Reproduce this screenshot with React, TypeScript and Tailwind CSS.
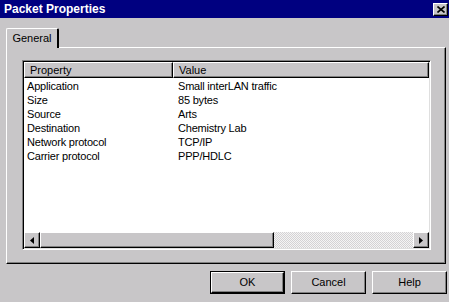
import React from "react";

const rows = [
  ["Application", "Small interLAN traffic"],
  ["Size", "85 bytes"],
  ["Source", "Arts"],
  ["Destination", "Chemistry Lab"],
  ["Network protocol", "TCP/IP"],
  ["Carrier protocol", "PPP/HDLC"],
];

const raised =
  "border-t border-l border-t-white border-l-white border-r border-b border-r-black border-b-black shadow-[inset_-1px_-1px_0_#808080]";

const Arrow = ({ dir }: { dir: "left" | "right" }) => (
  <svg width="4" height="7" viewBox="0 0 4 7">
    {dir === "left" ? <path d="M4 0 L0 3.5 L4 7 Z" fill="#000" /> : <path d="M0 0 L4 3.5 L0 7 Z" fill="#000" />}
  </svg>
);

const DlgButton = ({ label, isDefault }: { label: string; isDefault?: boolean }) => (
  <div
    className={
      "w-[75px] h-[23px] flex items-center justify-center text-[11px] text-black " +
      (isDefault ? "border border-black" : "")
    }
  >
    <div className={"w-full h-full flex items-center justify-center " + raised}>{label}</div>
  </div>
);

export default function App() {
  return (
    <div
      className="w-[449px] h-[302px] bg-[#c8c6c8] flex flex-col overflow-hidden"
      style={{ fontFamily: '"Liberation Sans", Arial, sans-serif' }}
    >
      {/* title bar */}
      <div className="h-[18px] bg-[#000080] flex items-center justify-between pl-[4px] pr-[1px]">
        <span className="text-white font-bold text-[12px] leading-none">Packet Properties</span>
        <div className={"w-[15px] h-[13px] bg-[#c8c6c8] flex items-center justify-center " + raised}>
          <svg width="8" height="7" viewBox="0 0 8 7">
            <path d="M0.5 0.5 L7.5 6.5 M7.5 0.5 L0.5 6.5" stroke="#000" strokeWidth="1.6" />
          </svg>
        </div>
      </div>

      <div className="flex flex-col pt-[10px] pl-[6px] pr-[3px]">
        {/* tab strip */}
        <div className="flex">
          <div className="relative z-10 -mb-px w-[53px] h-[20px] bg-[#c8c6c8] border-t border-l border-white border-r-2 border-r-black rounded-t-[2px] flex items-center justify-center text-[11px] text-black pb-[1px]">
            General
          </div>
        </div>

        {/* tab panel */}
        <div className="h-[217px] border-t border-l border-white border-r border-b border-r-black border-b-black shadow-[inset_-1px_-1px_0_#808080] pt-[12px] pl-[15px] pr-[14px] pb-[14px]">
          {/* list view */}
          <div className="h-[190px] border-t border-l border-[#808080] border-r border-b border-r-white border-b-white shadow-[inset_1px_1px_0_#000,inset_-1px_-1px_0_#dfdfdf] p-[1px] flex flex-col">
            <div className="flex-1 bg-white flex flex-col">
              {/* header */}
              <div className="flex h-[16px] bg-[#c8c6c8] text-[11px] text-black">
                <div className={"w-[149px] flex items-center pl-[5px] " + raised}>Property</div>
                <div className={"flex-1 flex items-center pl-[5px] " + raised}>Value</div>
              </div>
              {/* rows */}
              <div className="flex-1 pt-[1px]">
                {rows.map(([k, v]) => (
                  <div key={k} className="flex h-[14px] items-center text-[11px] text-black leading-none tracking-[-0.2px]">
                    <span className="w-[154px] pl-[3px]">{k}</span>
                    <span>{v}</span>
                  </div>
                ))}
              </div>
              {/* horizontal scrollbar */}
              <div className="flex h-[16px] bg-[#c8c6c8]">
                <div className={"w-[16px] flex items-center justify-center " + raised}>
                  <Arrow dir="left" />
                </div>
                <div className={"w-[234px] " + raised} />
                <div className="flex-1 bg-[repeating-conic-gradient(#f4f4f4_0_25%,#d4d2d4_0_50%)] bg-[length:2px_2px]" />
                <div className={"w-[16px] flex items-center justify-center " + raised}>
                  <Arrow dir="right" />
                </div>
              </div>
            </div>
          </div>
        </div>

        {/* buttons */}
        <div className="flex justify-end gap-[6px] pt-[7px] mr-[-1px]">
          <DlgButton label="OK" isDefault />
          <DlgButton label="Cancel" />
          <DlgButton label="Help" />
        </div>
      </div>
    </div>
  );
}
